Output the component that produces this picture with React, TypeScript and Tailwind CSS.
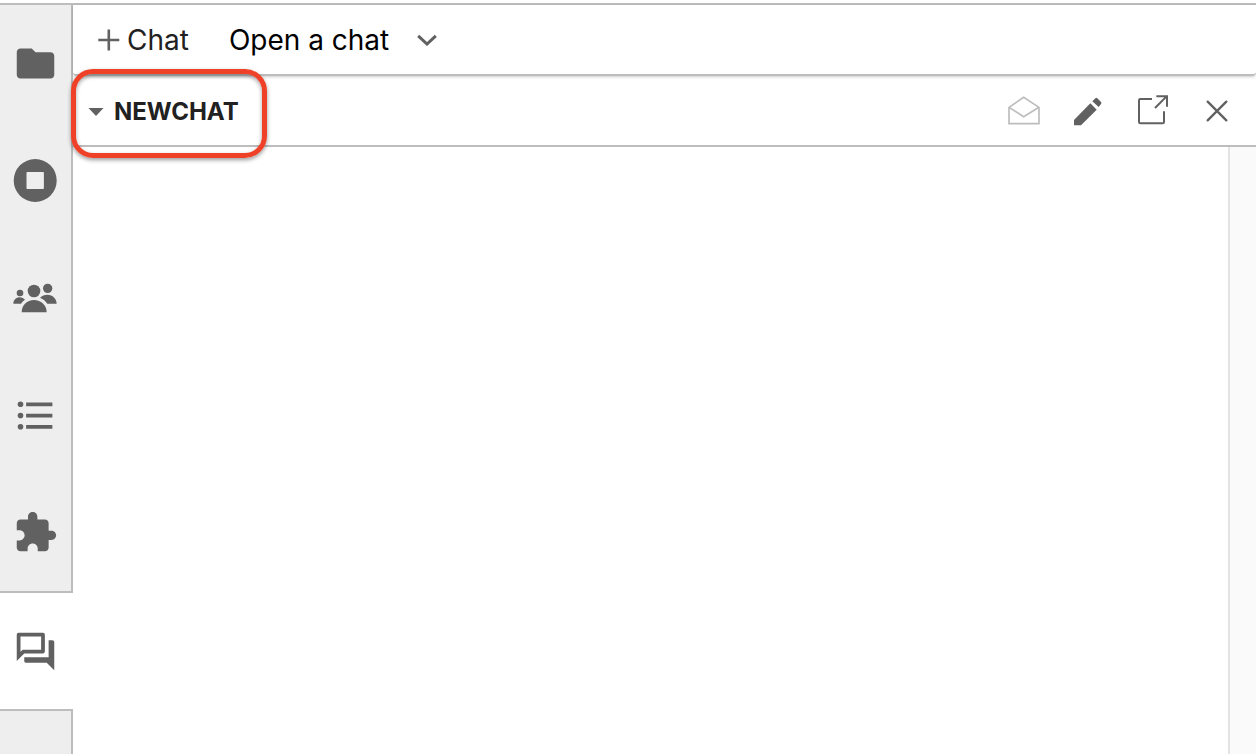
import type { ReactNode } from "react";

const sideIcon = "h-[45px] w-[45px]";

function FolderIcon() {
  return (
    <svg viewBox="0 0 24 24" className={sideIcon} fill="currentColor" aria-hidden="true">
      <path d="M10 4H4c-1.1 0-1.99.9-1.99 2L2 18c0 1.1.9 2 2 2h16c1.1 0 2-.9 2-2V8c0-1.1-.9-2-2-2h-8l-2-2z" />
    </svg>
  );
}

function RunningIcon() {
  return (
    <svg viewBox="0 0 45 45" className={sideIcon} fill="currentColor" aria-hidden="true">
      <path
        fillRule="evenodd"
        d="M22.2 1a21.5 21.5 0 1 0 0 43a21.5 21.5 0 1 0 0-43zM14.4 14h15.6q.9 0 .9.9v15.2q0 .9-.9.9H14.4q-.9 0-.9-.9V14.9q0-.9.9-.9z"
      />
    </svg>
  );
}

function UsersIcon() {
  return (
    <svg viewBox="0 0 135 135" className={sideIcon} fill="currentColor" aria-hidden="true">
      <circle cx="21" cy="51" r="10" />
      <path d="M1 83c0-11 9-19 19-19c7 0 12 3 16 7c-5 3-9 7-12 12z" />
      <circle cx="104" cy="37" r="14" />
      <path d="M81 65c6-6 14-9 22-9c16 0 28 12 28 27h-28c-5-8-12-14-22-18z" />
      <circle cx="63" cy="45" r="19" />
      <path d="M26 109c0-22 16-37 37-37s38 15 38 37z" />
    </svg>
  );
}

function ListIcon() {
  return (
    <svg viewBox="0 0 24 24" className={sideIcon} fill="currentColor" aria-hidden="true">
      <path d="M7 5h14v2H7zM7 11h14v2H7zM7 17h14v2H7z" />
      <circle cx="4" cy="6" r="1.5" />
      <circle cx="4" cy="12" r="1.5" />
      <circle cx="4" cy="18" r="1.5" />
    </svg>
  );
}

function PuzzleIcon() {
  return (
    <svg viewBox="0 0 24 24" className={sideIcon} fill="currentColor" aria-hidden="true">
      <path d="M20.5 11H19V7c0-1.1-.9-2-2-2h-4V3.5C13 2.12 11.88 1 10.5 1S8 2.12 8 3.5V5H4c-1.1 0-1.99.9-1.99 2v3.8H3.5c1.49 0 2.7 1.21 2.7 2.7s-1.21 2.7-2.7 2.7H2V20c0 1.1.9 2 2 2h3.8v-1.5c0-1.49 1.21-2.7 2.7-2.7 1.49 0 2.7 1.21 2.7 2.7V22H17c1.1 0 2-.9 2-2v-4h1.5c1.38 0 2.5-1.12 2.5-2.5S21.88 11 20.5 11z" />
    </svg>
  );
}

function ChatIcon() {
  return (
    <svg viewBox="0 0 24 24" className={sideIcon} fill="currentColor" aria-hidden="true">
      <path d="M15 4v7H5.17L4 12.17V4h11m1-2H3c-.55 0-1 .45-1 1v14l4-4h10c.55 0 1-.45 1-1V3c0-.55-.45-1-1-1zm5 4h-2v9H6v2c0 .55.45 1 1 1h11l4 4V7c0-.55-.45-1-1-1z" />
    </svg>
  );
}

function SideTab({ label, children }: { label: string; children: ReactNode }) {
  return (
    <button
      type="button"
      aria-label={label}
      className="flex flex-1 items-center border-r-2 border-[#bdbdbd] bg-[#eeeeee] pl-[13px]"
    >
      {children}
    </button>
  );
}

function ToolButton({ label, view, children }: { label: string; view: string; children: ReactNode }) {
  return (
    <button type="button" aria-label={label} className="flex h-16 w-16 items-center justify-center">
      <svg viewBox={view} className="h-9 w-9" fill="none" stroke="currentColor" strokeWidth="6" aria-hidden="true">
        {children}
      </svg>
    </button>
  );
}

export default function App() {
  return (
    <div className="flex min-h-screen flex-col bg-white pt-[3px] font-['Inter',sans-serif] text-[#212121]">
      <div className="flex grow border-t-2 border-[#bdbdbd]">
        <nav aria-label="Sidebar" className="flex w-[73px] shrink-0 flex-col text-[#616161]">
          <div className="flex h-[586px] flex-col">
            <SideTab label="File browser"><FolderIcon /></SideTab>
            <SideTab label="Running sessions"><RunningIcon /></SideTab>
            <SideTab label="Collaboration"><UsersIcon /></SideTab>
            <SideTab label="Table of contents"><ListIcon /></SideTab>
            <SideTab label="Extensions"><PuzzleIcon /></SideTab>
          </div>
          <button
            type="button"
            aria-label="Chat panel"
            aria-pressed="true"
            className="flex h-[120px] items-center border-y-2 border-[#bdbdbd] bg-white pl-[13px]"
          >
            <ChatIcon />
          </button>
          <div className="grow border-r-2 border-[#bdbdbd] bg-[#eeeeee]" />
        </nav>

        <main className="flex min-w-0 grow flex-col">
          <div className="flex h-[71px] items-center rounded-b-sm border-b-2 border-[#bdbdbd] pl-6 text-[28px] leading-9 shadow-[0_1px_3px_rgba(0,0,0,0.2)]">
            <button type="button" className="flex items-center gap-1.5">
              <svg viewBox="0 0 24 24" className="h-6 w-6" fill="none" stroke="#616161" strokeWidth="2.6" aria-hidden="true">
                <path d="M1.3 12H22.3M11.8 1.5V22.5" />
              </svg>
              Chat
            </button>
            <button type="button" className="ml-10 flex items-center gap-7 text-black">
              Open a chat
              <svg viewBox="0 0 20 12" className="h-3 w-5" fill="none" stroke="#616161" strokeWidth="3" aria-hidden="true">
                <path d="M1.2 1.8L10 10L18.8 1.8" />
              </svg>
            </button>
          </div>

          <section className="flex grow flex-col">
            <header className="relative flex h-[71px] items-center justify-between border-b-2 border-[#bdbdbd] pr-[7px]">
              <button type="button" aria-expanded="true" className="flex items-center gap-[10px] pt-0.5 pl-[15px] text-2xl font-bold">
                <svg viewBox="0 0 16 8" className="h-2 w-4" fill="#616161" aria-hidden="true">
                  <path d="M.5 0H15.5L8 8z" />
                </svg>
                NEWCHAT
              </button>
              <div className="pointer-events-none absolute -left-0.5 -top-[7px] h-[89px] w-[196px] rounded-[22px] border-5 border-[#ee4128] shadow-[0_2px_4px_rgba(0,0,0,0.4),inset_0_2px_4px_rgba(0,0,0,0.35)]" />
              <div className="flex text-[#616161]">
                <div className="flex text-[#bdbdbd]">
                  <ToolButton label="Mark as read" view="51 97 108 108">
                    <path strokeWidth="5" d="M57 140L101 110L147 140V189H57zL101 168L147 140" />
                  </ToolButton>
                </div>
                <ToolButton label="Rename" view="243 97 108 108">
                  <g fill="currentColor" stroke="none">
                    <path d="M252 178L301 128L320 147L273 194H254Q252 194 252 192z" />
                    <path d="M307 122L316 113Q319 110 322 113L333 124Q336 127 333 130L326 139z" />
                  </g>
                </ToolButton>
                <ToolButton label="Move to main area" view="435 97 108 108">
                  <path d="M486 115H451Q447 115 447 119V184Q447 188 451 188H518Q522 188 522 184V152" />
                  <path d="M495 142L529 108M499 107H531V138" />
                </ToolButton>
                <ToolButton label="Close" view="627 99 108 108">
                  <path strokeWidth="7" strokeLinecap="round" d="M653 125L709 181M709 125L653 181" />
                </ToolButton>
              </div>
            </header>
            <div className="flex grow justify-end">
              <div className="w-7 border-l-2 border-[#e4e4e4] bg-[#fafafa]" />
            </div>
          </section>
        </main>
      </div>
    </div>
  );
}
